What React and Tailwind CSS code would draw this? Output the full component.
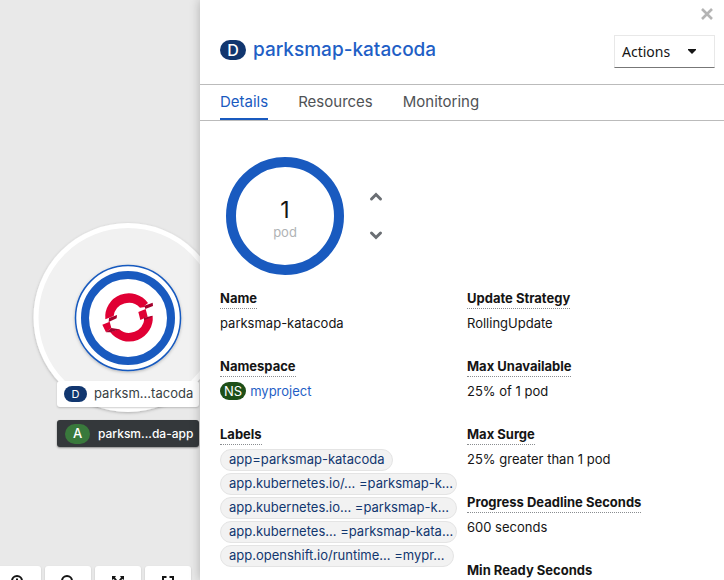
import React from "react";

const leftFields = [
  { term: "Name", value: "parksmap-katacoda" },
  { term: "Namespace", badge: "NS", link: "myproject" },
];

const labels = [
  "app=parksmap-katacoda",
  "app.kubernetes.io/... =parksmap-k...",
  "app.kubernetes.io... =parksmap-k...",
  "app.kubernetes... =parksmap-kata...",
  "app.openshift.io/runtime... =mypr...",
];

const rightFields = [
  { term: "Update Strategy", value: "RollingUpdate" },
  { term: "Max Unavailable", value: "25% of 1 pod" },
  { term: "Max Surge", value: "25% greater than 1 pod" },
  { term: "Progress Deadline Seconds", value: "600 seconds" },
  { term: "Min Ready Seconds" },
];

function Term({ children }) {
  return (
    <dt className="flex h-5 items-start">
      <span className="h-5 border-b border-dotted border-[#8a8d90] text-[13px] font-bold leading-[18px] text-[#151515]">
        {children}
      </span>
    </dt>
  );
}

function Field({ term, value, badge, link }) {
  return (
    <div className="mb-6">
      <Term>{term}</Term>
      <dd className="flex h-6 items-end gap-1 leading-5 text-[#151515]">
        {badge && (
          <span className="mb-px flex h-[18px] items-center rounded-full bg-[#1e4f18] px-1 text-[13px] text-white">
            {badge}
          </span>
        )}
        {link ? (
          <a href="#project" className="text-[#1f5fc6]">
            {link}
          </a>
        ) : (
          value
        )}
      </dd>
    </div>
  );
}

function AppNode() {
  return (
    <svg
      className="absolute left-[28px] top-[217px]"
      width="200"
      height="200"
      viewBox="28 217 200 200"
      role="img"
      aria-label="parksmap-katacoda deployment"
    >
      <defs>
        <filter id="shade" x="-20%" y="-20%" width="140%" height="140%">
          <feDropShadow dx="0" dy="1" stdDeviation="1.5" floodOpacity="0.25" />
        </filter>
      </defs>
      <circle cx="128" cy="317.5" r="92" fill="#f1f1f1" stroke="#fff" strokeWidth="5" filter="url(#shade)" />
      <circle cx="128" cy="318" r="52.5" fill="#fff" stroke="#195abf" strokeWidth="1.5" filter="url(#shade)" />
      <circle cx="128" cy="318" r="43" fill="#fff" stroke="#195abf" strokeWidth="8" />
      <g transform="translate(20 210) scale(0.33333)">
        <path
          fill="#e00034"
          d="M256 328A71 71 0 0 1 384 279L374 287L375 291L360 293A46 46 0 0 0 281 318ZM398 317A71 71 0 0 1 271 367L297 357A46 46 0 0 0 373 328ZM247 344L269 335L274 354L258 367ZM355 306L377 297L383 320L361 330Z"
        />
        <path
          fill="#a3002c"
          d="M267 324L291 315L290 325L266 336ZM258 367L274 354L298 358L273 367ZM373 287L398 278L399 288L376 297ZM372 331L372 323L397 317L395 322Z"
        />
      </g>
    </svg>
  );
}

const toolClass =
  "flex h-[36px] w-[46px] justify-center rounded-[3px] bg-white pt-2 text-[#151515] shadow-[0_1px_2px_rgba(0,0,0,0.2)]";

function Toolbar() {
  return (
    <div className="absolute -bottom-[22px] -left-[5px] flex gap-1">
      <button type="button" aria-label="Zoom in" className={toolClass}>
        <svg width="16" height="16" viewBox="0 0 16 16" fill="none" stroke="currentColor" strokeWidth="2">
          <circle cx="7" cy="7" r="5" />
          <path d="M11 11L15 15M7 4.5V9.500M4.500 7H9.500" />
        </svg>
      </button>
      <button type="button" aria-label="Zoom out" className={toolClass}>
        <svg width="16" height="16" viewBox="0 0 16 16" fill="none" stroke="currentColor" strokeWidth="2">
          <circle cx="7" cy="7" r="5" />
          <path d="M11 11L15 15M4.500 7.500H9.500" />
        </svg>
      </button>
      <button type="button" aria-label="Fit to screen" className={toolClass}>
        <svg width="14" height="16" viewBox="0 0 14 16" fill="currentColor">
          <path d="M1 2H5L4 3.500L6 6L5 7L2.500 5L1 6ZM13 2H9L10 3.500L8 6L9 7L11.500 5L13 6ZM1 14H5L4 12.500L6 10L5 9L2.500 11L1 10ZM13 14H9L10 12.500L8 10L9 9L11.500 11L13 10Z" />
        </svg>
      </button>
      <button type="button" aria-label="Reset view" className={toolClass}>
        <svg width="14" height="16" viewBox="0 0 14 16" fill="none" stroke="currentColor" strokeWidth="2">
          <path d="M2 7V3H5.500M8.500 3H12V7M12 10V14H8.500M5.500 14H2V10" />
        </svg>
      </button>
    </div>
  );
}

function Topology() {
  return (
    <section className="relative w-[200px] shrink-0 overflow-hidden bg-[#e9e9e9]" aria-label="Topology">
      <AppNode />
      <div className="absolute left-[57px] top-[381px] flex h-[26px] w-[142px] items-center gap-[7px] whitespace-nowrap rounded-[3px] bg-white pl-[7px] text-[13px] text-[#393f44] shadow-[0_1px_2px_rgba(0,0,0,0.2)]">
        <span className="flex h-4 w-[23px] items-center justify-center rounded-full bg-[#11366f] text-[11px] text-white">D</span>
        parksm...tacoda
      </div>
      <div className="absolute left-[57px] top-[420px] flex h-[27px] w-[142px] items-center gap-2 whitespace-nowrap rounded-[3px] bg-[#34383b] pl-2 text-[12px] font-medium text-white shadow-[0_1px_2px_rgba(0,0,0,0.4)]">
        <span className="flex h-5 w-[25px] items-center justify-center rounded-full bg-[#39793c] text-[13px]">A</span>
        parksm...da-app
      </div>
      <Toolbar />
    </section>
  );
}

export default function App() {
  return (
    <div className="flex h-screen overflow-hidden bg-[#e9e9e9] font-['Inter',sans-serif] text-[13px]">
      <Topology />
      <aside className="relative min-w-0 flex-1 bg-white shadow-[0_0_10px_rgba(0,0,0,0.25)]">
        <header className="border-b border-[#bbb]">
          <div className="flex h-7 items-center justify-end pr-[11px]">
            <button type="button" aria-label="Close" className="text-[#b4b4b4]">
              <svg width="12" height="12" viewBox="0 0 12 12" stroke="currentColor" strokeWidth="2.600">
                <path d="M1 1L11 11M11 1L1 11" />
              </svg>
            </button>
          </div>
          <div className="flex h-14 items-start justify-between pl-5 pr-[9px]">
            <h1 className="flex h-11 items-center gap-[7px] text-[19px] font-medium text-[#1f5fc6]">
              <span className="flex h-5 w-[26px] items-center justify-center rounded-full bg-[#11366f] text-[16px] text-white">D</span>
              <a href="#deployment">parksmap-katacoda</a>
            </h1>
            <button
              type="button"
              className="mt-[7px] flex h-[33px] w-[101px] items-center justify-between border border-[#e8e8e8] border-b-[#777] pl-[7px] pr-[18px] font-['Noto_Sans',sans-serif] text-[14px] text-[#151515]"
            >
              Actions
              <svg width="8" height="5" viewBox="0 0 8 5" fill="currentColor">
                <path d="M0 0H8V1L4 5L0 1Z" />
              </svg>
            </button>
          </div>
        </header>
        <nav className="flex h-9 gap-[30px] border-b border-[#bbb] px-5 text-[15px] leading-[33px] text-[#4f5255]">
          <a href="#details" aria-current="page" className="h-[35px] border-b-2 border-[#195abf] text-[#195abf]">
            Details
          </a>
          <a href="#resources">Resources</a>
          <a href="#monitoring">Monitoring</a>
        </nav>
        <div className="px-5 pt-9">
          <div className="flex items-center gap-6 pl-[6px]">
            <div className="flex size-[118px] flex-col items-center justify-center rounded-full border-10 border-[#195abf] pt-1">
              <span className="text-[23px] leading-7 text-[#151515]">1</span>
              <span className="leading-4 text-[#b0b3b5]">pod</span>
            </div>
            <div className="flex flex-col gap-[22px] text-[#6a6e73]">
              <button type="button" aria-label="Increase pod count">
                <svg width="16" height="16" viewBox="0 0 16 16" fill="none" stroke="currentColor" strokeWidth="3" strokeLinecap="round">
                  <path d="M3.500 10L8 5.500L12.500 10" />
                </svg>
              </button>
              <button type="button" aria-label="Decrease pod count">
                <svg width="16" height="16" viewBox="0 0 16 16" fill="none" stroke="currentColor" strokeWidth="3" strokeLinecap="round">
                  <path d="M3.500 6L8 10.500L12.500 6" />
                </svg>
              </button>
            </div>
          </div>
          <div className="mt-[14px] grid grid-cols-2 gap-[10px]">
            <dl className="min-w-0">
              {leftFields.map((f) => (
                <Field key={f.term} {...f} />
              ))}
              <Term>Labels</Term>
              <dd className="flex flex-col items-start gap-[2px] pt-1">
                {labels.map((l) => (
                  <a
                    key={l}
                    href="#label"
                    className="flex h-[22px] max-w-full items-center whitespace-nowrap rounded-full border border-[#e4e4e4] bg-[#f2f2f2] px-2 text-[#11366f]"
                  >
                    {l}
                  </a>
                ))}
              </dd>
            </dl>
            <dl className="min-w-0">
              {rightFields.map((f) => (
                <Field key={f.term} {...f} />
              ))}
            </dl>
          </div>
        </div>
      </aside>
    </div>
  );
}
